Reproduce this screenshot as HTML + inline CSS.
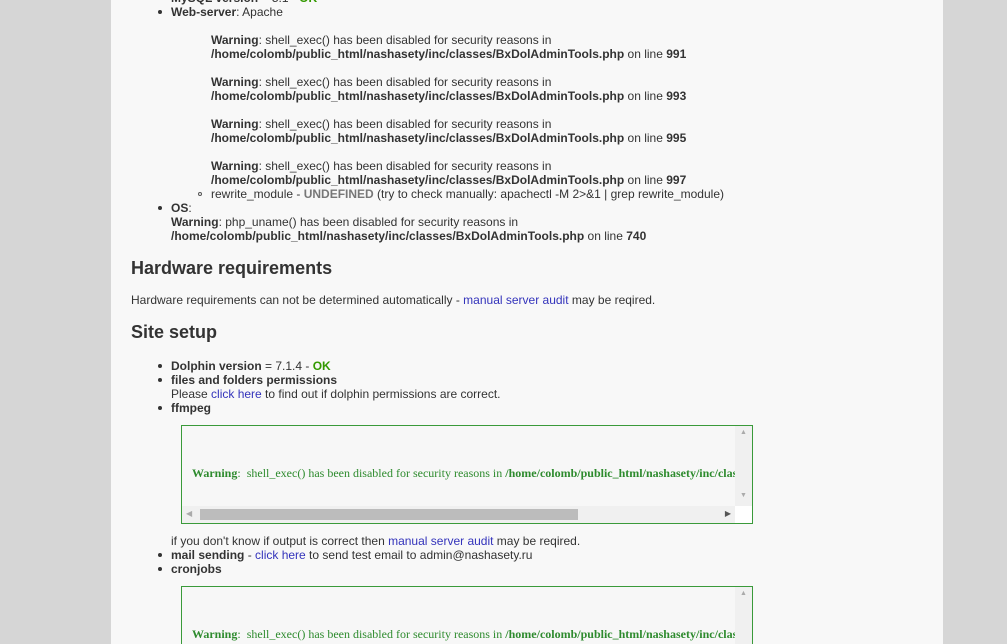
<!DOCTYPE html>
<html><head><meta charset="utf-8">
<style>
html,body{margin:0;padding:0;width:1007px;height:644px;overflow:hidden;background:#d6d6d6;}
body{font-family:"Liberation Sans",Arial,sans-serif;font-size:12px;color:#333;position:relative;}
#panel{position:absolute;left:111px;top:0;width:832px;height:644px;background:#f8f8f8;}
.l{position:absolute;white-space:nowrap;line-height:14px;}
b{font-weight:bold;}
a{color:#3333bb;text-decoration:none;}
.ok{color:#339900;font-weight:bold;}
h2{position:absolute;margin:0;font-size:18px;font-weight:bold;color:#333;white-space:nowrap;line-height:22px;}
.dot{position:absolute;width:4px;height:4px;border-radius:50%;background:#333;}
.circ{position:absolute;width:4px;height:4px;border-radius:50%;border:1px solid #555;box-sizing:border-box;}
.box{position:absolute;left:181px;width:570px;border:1px solid #3a9a3a;background:#f7f7f7;overflow:hidden;}
.box .t{position:absolute;left:10px;top:40px;font-family:"Liberation Serif",serif;font-size:12px;color:#2e8b2e;white-space:nowrap;}
.vs{position:absolute;right:0;top:0;width:17px;background:#f0f0f0;}
.hs{position:absolute;left:0;bottom:0;height:17px;right:17px;background:#f0f0f0;}
.thumb{position:absolute;left:18px;top:3px;width:378px;height:11px;background:#bcbcbc;}
</style></head><body>
<div id="panel"></div>
<div class="l" style="left:171px;top:-9px"><b>MySQL version</b> = 5.1 - <span class="ok">OK</span></div>
<div class="dot" style="left:158px;top:10px"></div>
<div class="l" style="left:171px;top:5px"><b>Web-server</b>: Apache</div>

<div class="l" style="left:211px;top:33px"><b>Warning</b>: shell_exec() has been disabled for security reasons in</div>
<div class="l" style="left:211px;top:47px"><b>/home/colomb/public_html/nashasety/inc/classes/BxDolAdminTools.php</b> on line <b>991</b></div>
<div class="l" style="left:211px;top:75px"><b>Warning</b>: shell_exec() has been disabled for security reasons in</div>
<div class="l" style="left:211px;top:89px"><b>/home/colomb/public_html/nashasety/inc/classes/BxDolAdminTools.php</b> on line <b>993</b></div>
<div class="l" style="left:211px;top:117px"><b>Warning</b>: shell_exec() has been disabled for security reasons in</div>
<div class="l" style="left:211px;top:131px"><b>/home/colomb/public_html/nashasety/inc/classes/BxDolAdminTools.php</b> on line <b>995</b></div>
<div class="l" style="left:211px;top:159px"><b>Warning</b>: shell_exec() has been disabled for security reasons in</div>
<div class="l" style="left:211px;top:173px"><b>/home/colomb/public_html/nashasety/inc/classes/BxDolAdminTools.php</b> on line <b>997</b></div>
<div class="circ" style="left:198px;top:192px"></div>
<div class="l" style="left:211px;top:187px">rewrite_module - <b style="color:#777">UNDEFINED</b> (try to check manually: apachectl -M 2&gt;&amp;1 | grep rewrite_module)</div>
<div class="dot" style="left:158px;top:206px"></div>
<div class="l" style="left:171px;top:201px"><b>OS</b>:</div>
<div class="l" style="left:171px;top:215px"><b>Warning</b>: php_uname() has been disabled for security reasons in</div>
<div class="l" style="left:171px;top:229px"><b>/home/colomb/public_html/nashasety/inc/classes/BxDolAdminTools.php</b> on line <b>740</b></div>

<h2 style="left:131px;top:257px">Hardware requirements</h2>
<div class="l" style="left:131px;top:293px">Hardware requirements can not be determined automatically - <a>manual server audit</a> may be reqired.</div>
<h2 style="left:131px;top:321px">Site setup</h2>

<div class="dot" style="left:158px;top:364px"></div>
<div class="l" style="left:171px;top:359px"><b>Dolphin version</b> = 7.1.4 - <span class="ok">OK</span></div>
<div class="dot" style="left:158px;top:378px"></div>
<div class="l" style="left:171px;top:373px"><b>files and folders permissions</b></div>
<div class="l" style="left:171px;top:387px">Please <a>click here</a> to find out if dolphin permissions are correct.</div>
<div class="dot" style="left:158px;top:406px"></div>
<div class="l" style="left:171px;top:401px"><b>ffmpeg</b></div>

<div class="box" style="top:425px;height:97px">
 <div class="t"><b>Warning</b>:&nbsp; shell_exec() has been disabled for security reasons in <b>/home/colomb/public_html/nashasety/inc/classes/BxDolAdminTools.php</b></div>
 <div class="vs" style="top:0;height:80px"><span style="position:absolute;left:5px;top:3px;font-size:7px;color:#aaa">▲</span><span style="position:absolute;left:5px;top:66px;font-size:7px;color:#aaa">▼</span></div>
 <div class="hs"><span style="position:absolute;left:4px;top:3px;font-size:8px;color:#aaa">◀</span><div class="thumb"></div><span style="position:absolute;right:4px;top:3px;font-size:8px;color:#555">▶</span></div>
 <div style="position:absolute;right:0;bottom:0;width:17px;height:17px;background:#fff"></div>
</div>

<div class="l" style="left:171px;top:534px">if you don't know if output is correct then <a>manual server audit</a> may be reqired.</div>
<div class="dot" style="left:158px;top:553px"></div>
<div class="l" style="left:171px;top:548px"><b>mail sending</b> - <a>click here</a> to send test email to admin@nashasety.ru</div>
<div class="dot" style="left:158px;top:567px"></div>
<div class="l" style="left:171px;top:562px"><b>cronjobs</b></div>

<div class="box" style="top:586px;height:58px;border-bottom:none">
 <div class="t"><b>Warning</b>:&nbsp; shell_exec() has been disabled for security reasons in <b>/home/colomb/public_html/nashasety/inc/classes/BxDolAdminTools.php</b></div>
 <div class="vs" style="top:0;height:58px"><span style="position:absolute;left:5px;top:3px;font-size:7px;color:#aaa">▲</span></div>
</div>
</body></html>
